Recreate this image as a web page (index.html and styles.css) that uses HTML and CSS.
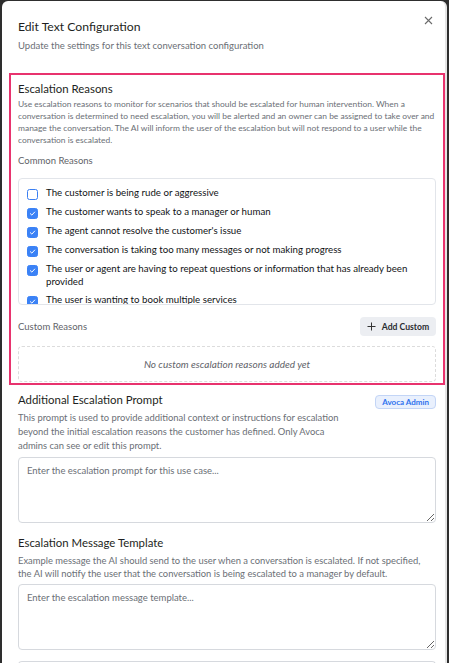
FILE: index.html
```html
<!DOCTYPE html>
<html>
<head>
<meta charset="utf-8">
<link rel="stylesheet" href="styles.css">
</head>
<body>
<div class="modal">
  <button class="close" aria-label="Close">
    <svg width="9" height="9" viewBox="0 0 9 9"><path d="M1 1L8 8M8 1L1 8" stroke="#6b6b6b" stroke-width="1.1" fill="none"/></svg>
  </button>
  <div class="header">
    <h1 class="title">Edit Text Configuration</h1>
    <p class="subtitle">Update the settings for this text conversation configuration</p>
  </div>
  <div class="content">
    <section class="highlight">
      <h2 class="sec-title">Escalation Reasons</h2>
      <p class="sec-desc">Use escalation reasons to monitor for scenarios that should be escalated for human intervention. When a conversation is determined to need escalation, you will be alerted and an owner can be assigned to take over and manage the conversation. The AI will inform the user of the escalation but will not respond to a user while the conversation is escalated.</p>
      <div class="sub-label common">Common Reasons</div>
      <div class="reason-list">
        <label class="reason"><span class="cb"></span><span class="reason-text">The customer is being rude or aggressive</span></label>
        <label class="reason"><span class="cb checked"><svg viewBox="0 0 10 10"><path d="M2.6 5.2L4.3 6.8L7.4 3.4" stroke="#fff" stroke-width="1.1" fill="none" stroke-linecap="round" stroke-linejoin="round"/></svg></span><span class="reason-text">The customer wants to speak to a manager or human</span></label>
        <label class="reason"><span class="cb checked"><svg viewBox="0 0 10 10"><path d="M2.6 5.2L4.3 6.8L7.4 3.4" stroke="#fff" stroke-width="1.1" fill="none" stroke-linecap="round" stroke-linejoin="round"/></svg></span><span class="reason-text">The agent cannot resolve the customer's issue</span></label>
        <label class="reason"><span class="cb checked"><svg viewBox="0 0 10 10"><path d="M2.6 5.2L4.3 6.8L7.4 3.4" stroke="#fff" stroke-width="1.1" fill="none" stroke-linecap="round" stroke-linejoin="round"/></svg></span><span class="reason-text">The conversation is taking too many messages or not making progress</span></label>
        <label class="reason"><span class="cb checked"><svg viewBox="0 0 10 10"><path d="M2.6 5.2L4.3 6.8L7.4 3.4" stroke="#fff" stroke-width="1.1" fill="none" stroke-linecap="round" stroke-linejoin="round"/></svg></span><span class="reason-text">The user or agent are having to repeat questions or information that has already been provided</span></label>
        <label class="reason"><span class="cb checked"><svg viewBox="0 0 10 10"><path d="M2.6 5.2L4.3 6.8L7.4 3.4" stroke="#fff" stroke-width="1.1" fill="none" stroke-linecap="round" stroke-linejoin="round"/></svg></span><span class="reason-text">The user is wanting to book multiple services</span></label>
      </div>
      <div class="custom-row">
        <div class="sub-label">Custom Reasons</div>
        <button class="add-btn"><svg width="9" height="9" viewBox="0 0 9 9"><path d="M4.5 0.5V8.5M0.5 4.5H8.5" stroke="#333" stroke-width="1" fill="none"/></svg><span>Add Custom</span></button>
      </div>
      <div class="empty">No custom escalation reasons added yet</div>
    </section>

    <section class="plain">
      <div class="title-row">
        <div class="title-col">
          <h2 class="sec-title">Additional Escalation Prompt</h2>
          <p class="field-desc narrow">This prompt is used to provide additional context or instructions for escalation beyond the initial escalation reasons the customer has defined. Only Avoca admins can see or edit this prompt.</p>
        </div>
        <span class="badge">Avoca Admin</span>
      </div>
      <textarea class="ta" placeholder="Enter the escalation prompt for this use case..."></textarea>
    </section>

    <section class="plain second">
      <h2 class="sec-title">Escalation Message Template</h2>
      <p class="field-desc tight">Example message the AI should send to the user when a conversation is escalated. If not specified, the AI will notify the user that the conversation is being escalated to a manager by default.</p>
      <textarea class="ta" placeholder="Enter the escalation message template..."></textarea>
    </section>

    <section class="plain next">
      <div class="next-box"></div>
    </section>
  </div>
</div>
</body>
</html>
```
FILE: styles.css
```css
* { box-sizing: border-box; }
html, body { margin: 0; padding: 0; }
body {
  background: #2e2e2e;
  height: 663px;
  overflow: hidden;
  font-family: "Lato", "Nunito", sans-serif;
  color: #1f2328;
}
.modal {
  margin: 1px 0 0 2px;
  width: 445px;
  height: 700px;
  background: #fff;
  border-radius: 6px 6px 0 0;
  position: relative;
  border-right: 2px solid #e4e4e4;
}
.close {
  position: absolute;
  top: 13px;
  right: 11px;
  width: 12px;
  height: 12px;
  padding: 0;
  border: none;
  background: none;
  display: flex;
  align-items: center;
  justify-content: center;
}
.header { padding: 16px 16px 0 16px; }
.title {
  margin: 0;
  font-size: 12.2px;
  line-height: 20px;
  font-weight: 400;
  color: #1d1f22;
}
.subtitle {
  margin: 2px 0 0;
  font-size: 9.5px;
  line-height: 14px;
  color: #6b6f76;
}
.content { padding: 20px 0 0 7px; }
.highlight {
  width: 436px;
  border: 2px solid #e8336e;
  padding: 5px 7px 1px 7px;
}
.sec-title {
  margin: 0;
  font-size: 11.4px;
  line-height: 18px;
  font-weight: 400;
  color: #1d1f22;
}
.sec-desc {
  margin: 0;
  font-size: 8.45px;
  line-height: 12px;
  color: #6b6f76;
}
.sub-label {
  font-size: 9.5px;
  line-height: 14px;
  color: #5f6369;
}
.common { margin-top: 8px; }
.reason-list {
  margin-top: 10px;
  height: 127px;
  overflow: hidden;
  border: 1px solid #e2e5ea;
  border-radius: 4px;
  padding: 7px 8px 0 8px;
  display: flex;
  flex-direction: column;
  gap: 5px;
}
.reason {
  display: flex;
  align-items: flex-start;
  gap: 8px;
  font-size: 9.7px;
  line-height: 13px;
  color: #111315;
}
.cb {
  flex: none;
  width: 11px;
  height: 11px;
  margin-top: 3px;
  border: 1px solid #3b7ff2;
  border-radius: 2.5px;
  background: #fff;
  display: flex;
}
.cb.checked { background: #3b82f6; border-color: #3b82f6; }
.cb svg { width: 100%; height: 100%; }
.custom-row {
  margin-top: 12px;
  display: flex;
  justify-content: space-between;
  align-items: center;
}
.add-btn {
  width: 76px;
  height: 19px;
  border: none;
  border-radius: 4px;
  background: #eceef2;
  font-family: inherit;
  font-size: 8.6px;
  font-weight: 700;
  color: #2a2c30;
  display: flex;
  align-items: center;
  justify-content: center;
  gap: 6px;
  padding: 0;
}
.empty {
  margin-top: 10px;
  height: 36px;
  border: 1px dashed #dcdcdc;
  border-radius: 4px;
  display: flex;
  align-items: center;
  justify-content: center;
  font-size: 10px;
  font-style: italic;
  color: #5f6369;
}
.plain { padding: 6px 9px 0 9px; width: 436px; }
.title-row { display: flex; justify-content: space-between; align-items: flex-start; }
.title-col { flex: 1; }
.field-desc {
  margin: 2px 0 0;
  font-size: 9.4px;
  line-height: 14px;
  color: #6b6f76;
}
.field-desc.narrow { max-width: 330px; }
.field-desc.tight { line-height: 13px; margin-top: 2px; }
.badge {
  margin-top: 4px;
  flex: none;
  height: 14px;
  padding: 0 6px;
  border: 1px solid #c3d5f6;
  border-radius: 4px;
  background: #e9f0fd;
  color: #2f72ee;
  font-size: 8px;
  line-height: 12px;
  font-weight: 700;
}
.ta {
  display: block;
  width: 418px;
  height: 66px;
  margin-top: 4px;
  border: 1px solid #d6d9de;
  border-radius: 4px;
  padding: 6px 8px;
  font-family: inherit;
  font-size: 9.5px;
  line-height: 13px;
  color: #222;
  resize: vertical;
}
.ta::placeholder { color: #6b6f76; }
.second { padding-top: 11px; }
.next { padding-top: 11px; }
.next-box { height: 20px; border-top: 1px solid #d6d9de; border-left: 1px solid #d6d9de; border-right: 1px solid #d6d9de; border-radius: 4px 4px 0 0; }
```
